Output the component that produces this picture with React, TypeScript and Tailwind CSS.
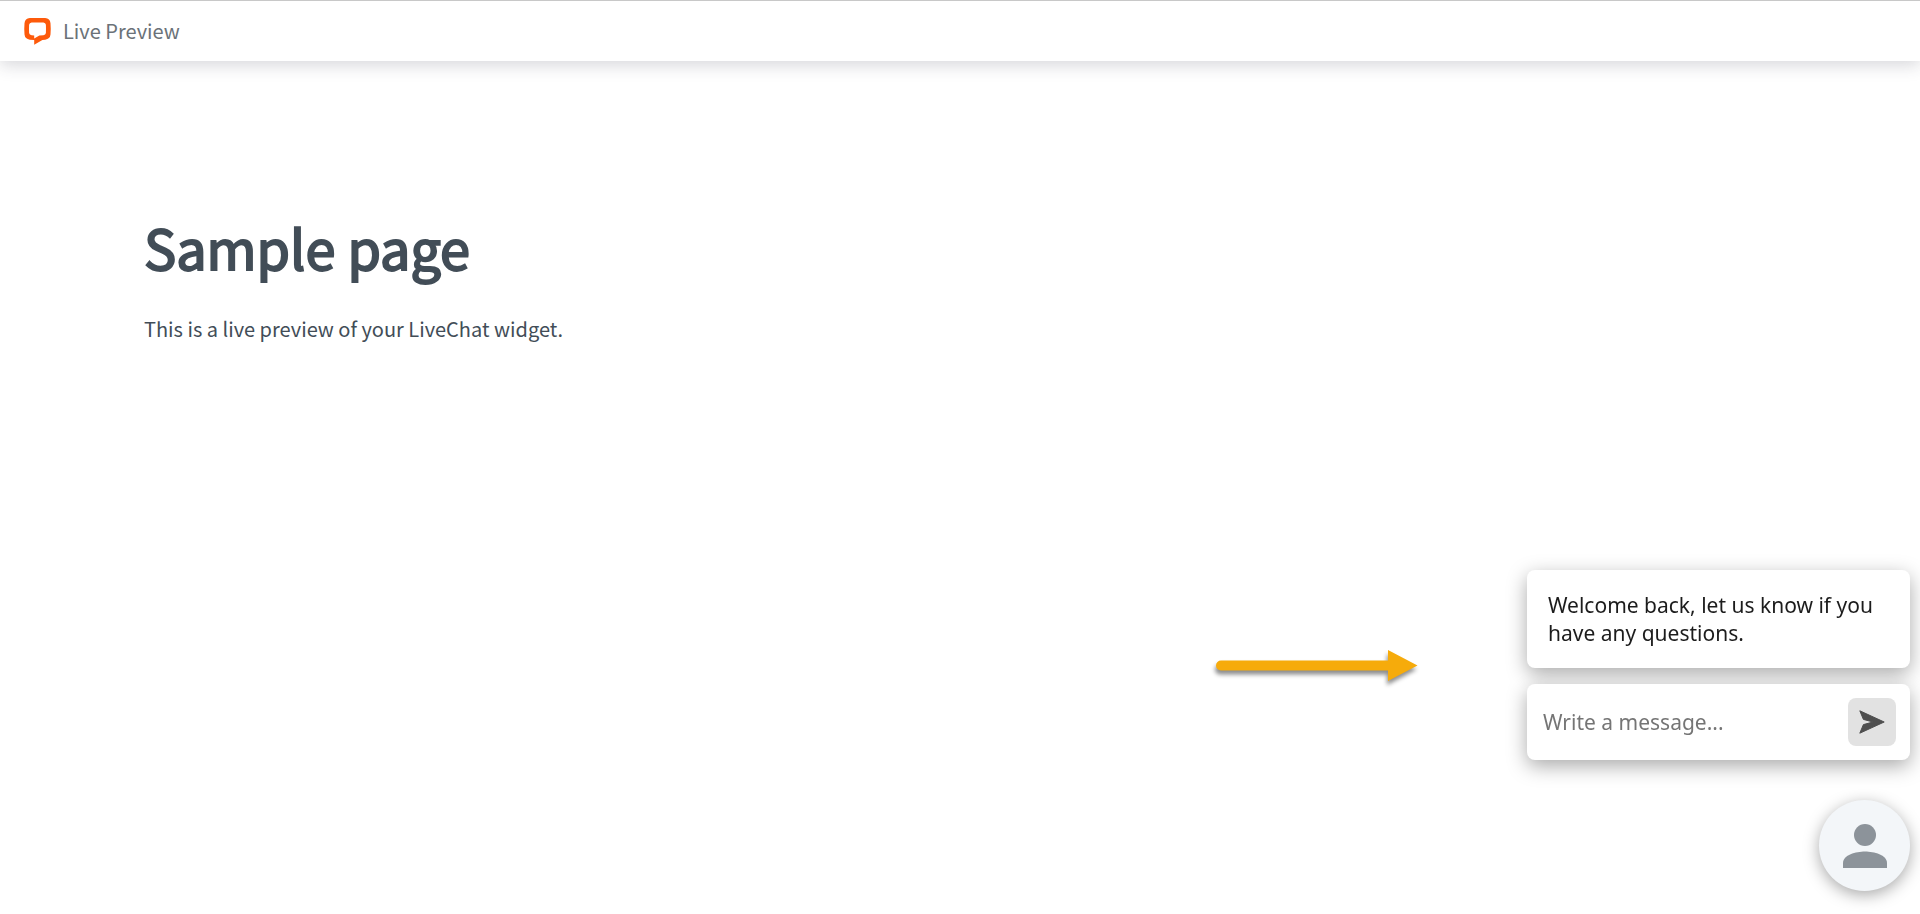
import { useState } from "react";

const CARD =
  "rounded-lg bg-white shadow-[0_6px_20px_rgba(0,0,0,0.34)]";

const LogoIcon = () => (
  <svg width="27" height="28" viewBox="0 0 27 28" aria-hidden="true">
    <path
      fill="#fd5a0b"
      fillRule="evenodd"
      d="M5.8 1.1 Q13.5 0.7 21.2 1.1 Q26 1.6 26.5 6.2 Q27 12 26.5 17.6 Q26 22.2 21.2 22.7 L18.4 23 L10.2 27.8 V23 L5.8 22.7 Q1 22.2 0.5 17.6 Q0 12 0.5 6.2 Q1 1.6 5.8 1.1 Z M7.6 5.6 Q5.4 5.8 5.1 7.8 Q4.9 12 5.1 16.1 Q5.4 18.1 7.6 18.3 L10.2 18.5 V21.4 L15.4 18.5 L19.4 18.3 Q21.6 18.1 21.9 16.1 Q22.1 12 21.9 7.8 Q21.6 5.8 19.4 5.6 Q13.5 5.3 7.6 5.6 Z"
    />
  </svg>
);

const SendIcon = () => (
  <svg width="26" height="24" viewBox="0 0 26 24" aria-hidden="true">
    <path
      fill="#4f4f4f"
      stroke="#4f4f4f"
      strokeWidth="1"
      strokeLinejoin="round"
      d="M0.8 0.8 L25.2 12 L0.8 23.2 L4.4 14.6 L14 12 L4.4 9.4 Z"
    />
  </svg>
);

const PersonIcon = () => (
  <svg width="44" height="44" viewBox="0 0 44 44" fill="#8c939a" aria-hidden="true">
    <circle cx="22" cy="11" r="11" />
    <path d="M0 44 V39 C0 31 13 27.5 22 27.5 S44 31 44 39 V44 Z" />
  </svg>
);

const Arrow = () => (
  <svg
    width="202"
    height="32"
    viewBox="0 0 202 32"
    className="overflow-visible drop-shadow-[-1px_4px_2px_rgba(0,0,0,0.45)]"
    aria-hidden="true"
  >
    <path
      fill="#f6ab0b"
      d="M5 10.5 H172 V0 L201.5 15.5 L172 31 V20.5 H5 A5 5 0 0 1 5 10.5 Z"
    />
  </svg>
);

function ChatWidget() {
  const [message, setMessage] = useState("");

  const handleSubmit = (e: React.FormEvent) => {
    e.preventDefault();
    setMessage("");
  };

  return (
    <div className="flex w-[383px] flex-col font-['Noto_Sans','Open_Sans',sans-serif]">
      <p className={`${CARD} px-[21px] py-[21px] text-[21px] leading-7 text-[#1c1c1c]`}>
        Welcome back, let us know if you have any questions.
      </p>

      <form
        onSubmit={handleSubmit}
        className={`${CARD} mt-4 flex h-[76px] items-center gap-3 pr-3.5 pl-4`}
      >
        <input
          type="text"
          aria-label="Write a message"
          placeholder="Write a message..."
          value={message}
          onChange={(e) => setMessage(e.target.value)}
          className="min-w-0 flex-1 text-[21px] leading-7 outline-none placeholder:text-[#757575]"
        />
        <button
          type="submit"
          aria-label="Send message"
          className="flex size-12 items-center justify-center rounded-lg bg-[#e2e2e2]"
        >
          <SendIcon />
        </button>
      </form>

      <button
        type="button"
        aria-label="Toggle chat"
        className="mt-10 flex size-[91px] items-center justify-center self-end rounded-full bg-[#f3f6f9] shadow-[0_4px_16px_rgba(0,0,0,0.34)]"
      >
        <PersonIcon />
      </button>
    </div>
  );
}

export default function App() {
  return (
    <div className="min-h-screen bg-white font-['Noto_Sans_CJK_SC',sans-serif] text-[#424d57]">
      <header className="flex h-[61px] items-center gap-3 border-t border-[#c8c8c8] bg-white px-6 shadow-[0_4px_16px_rgba(50,50,70,0.2)]">
        <LogoIcon />
        <span className="text-xl text-[#6b7278]">Live Preview</span>
      </header>

      <main className="px-36 pt-[146px]">
        <h1 className="text-[54px] leading-20 font-normal [-webkit-text-stroke:2px_#424d57]">
          Sample page
        </h1>
        <p className="mt-7 text-xl leading-7">
          This is a live preview of your LiveChat widget.
        </p>
      </main>

      <div className="fixed right-2.5 bottom-[23px] flex items-start gap-[109px]">
        <div className="pt-20">
          <Arrow />
        </div>
        <ChatWidget />
      </div>
    </div>
  );
}
